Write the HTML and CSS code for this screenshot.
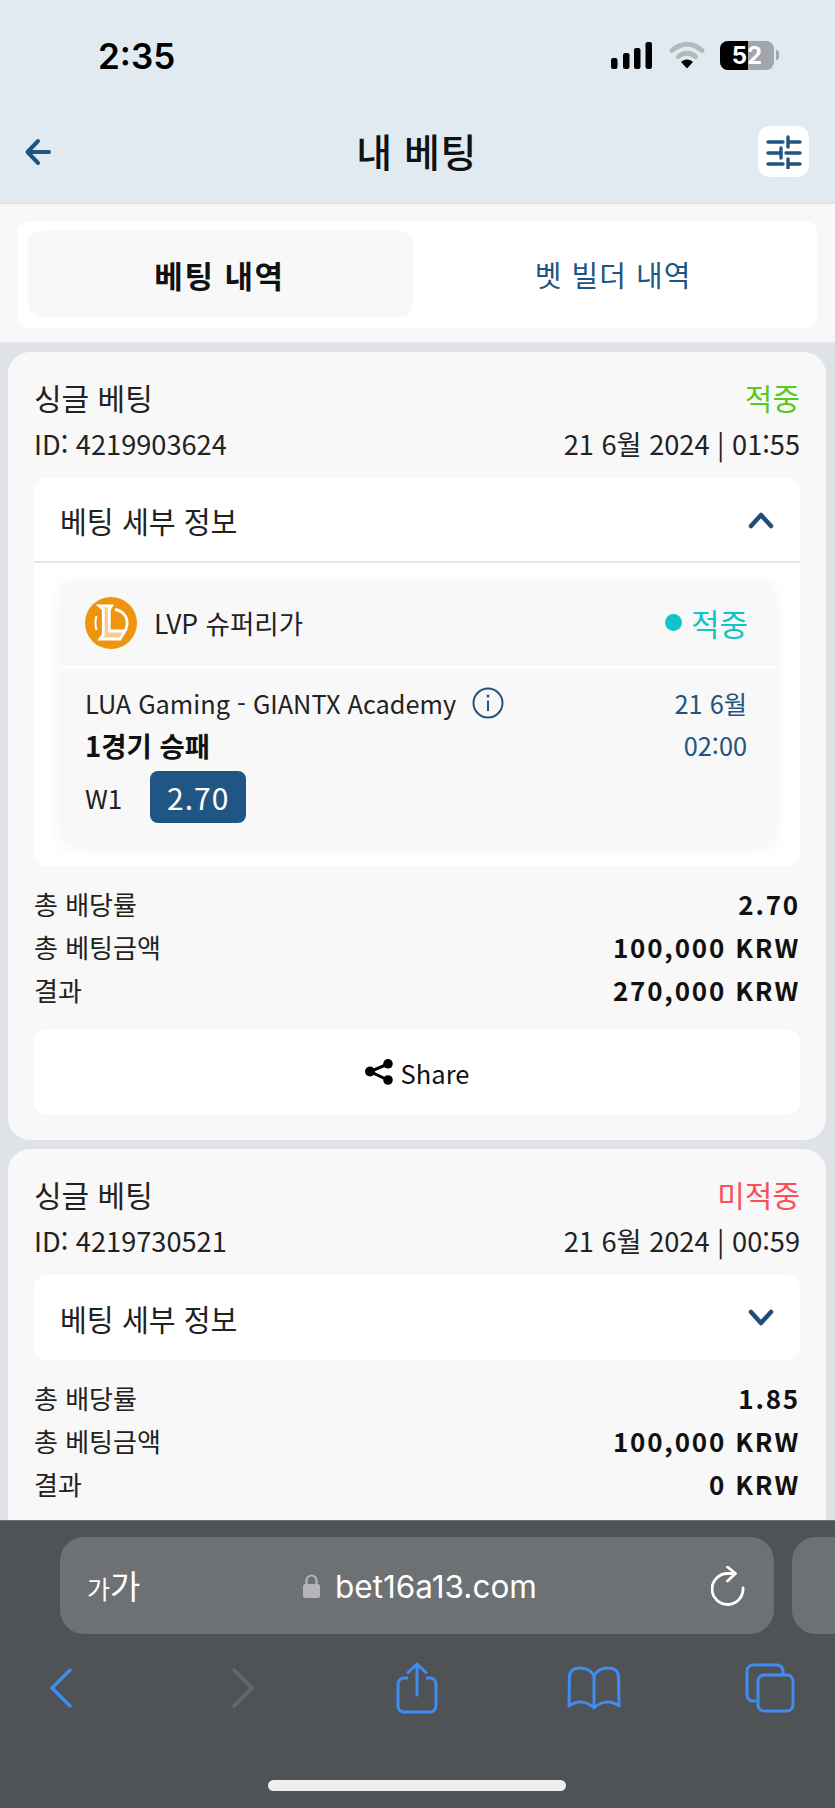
FILE: index.html
```html
<!DOCTYPE html>
<html lang="ko">
<head>
<meta charset="utf-8">
<title>내 베팅</title>
<link rel="stylesheet" href="styles.css">
</head>
<body>
<div class="phone">
  <header class="top">
    <div class="status">
      <span class="clock">2:35</span>
      <div class="status-icons">
        <svg class="signal" width="41" height="27" viewBox="0 0 41 27"><rect x="0" y="16" width="6.500" height="11" rx="2.200"/><rect x="12" y="11" width="6.500" height="16" rx="2.200"/><rect x="23" y="6" width="6.500" height="21" rx="2.200"/><rect x="34.500" y="0" width="6.500" height="27" rx="2.200"/></svg>
        <svg class="wifi" width="36" height="28" viewBox="0 0 36 28"><path d="M3 9.500C12 1 24 1 33 9.500" fill="none" stroke="#b4b9bc" stroke-width="5" stroke-linecap="round"/><path d="M9.500 15.500C14.500 11 21.500 11 26.500 15.500" fill="none" stroke="#b4b9bc" stroke-width="5" stroke-linecap="round"/><path d="M12 21C15 17.500 21 17.500 24 21L18 27.500Z" fill="#000"/></svg>
        <div class="battery"><span class="batt-fill"></span><span class="batt-num">52</span></div>
        <span class="batt-cap"></span>
      </div>
    </div>
    <div class="navbar">
      <svg class="nav-back" width="28" height="28" viewBox="0 0 28 28"><path d="M25 14H4M14 3 3.500 14 14 25" fill="none" stroke="#1f5580" stroke-width="4" stroke-linecap="round" stroke-linejoin="round"/></svg>
      <h1 class="title">내 베팅</h1>
      <button class="filter">
        <svg width="36" height="34" viewBox="0 0 36 34"><g stroke="#1f5580" stroke-width="3.400" stroke-linecap="round" fill="none"><path d="M2 7H17M22 7H34M22 2V12M2 18H15M15 23V13M20 18H34M2 29H17M22 29H34M22 24V33"/></g></svg>
      </button>
    </div>
  </header>

  <main class="content">
    <section class="tabs-wrap">
      <div class="tabs">
        <div class="tab tab-active">베팅 내역</div>
        <div class="tab tab-plain">벳 빌더 내역</div>
      </div>
    </section>

    <article class="card">
      <div class="row head"><span>싱글 베팅</span><span class="won">적중</span></div>
      <div class="row meta"><span>ID: 4219903624</span><span>21 6월 2024 | 01:55</span></div>
      <div class="details open">
        <div class="details-head">
          <span>베팅 세부 정보</span>
          <svg class="chev" width="26" height="18" viewBox="0 0 26 18"><path d="M3 15 13 4l10 11" fill="none" stroke="#1f4f78" stroke-width="4.500" stroke-linecap="round" stroke-linejoin="round"/></svg>
        </div>
        <div class="details-body">
          <div class="event">
            <div class="league">
              <svg class="logo" width="52" height="52" viewBox="0 0 52 52"><circle cx="26" cy="26" r="26" fill="#ee9510"/><g fill="none" stroke="#fff" stroke-width="2.800"><path d="M14.300 9H26.500L24.300 12.500V34H40L35 42H15L18.300 37.500V12.500Z" fill="#f7cc8c"/><path d="M30 12.500C39 14 43 21 42 28C41.600 30 41 32 40 33.500"/><path d="M11.500 19C10 24 10 28 11.500 33" stroke-width="2"/></g></svg>
              <span class="league-name">LVP 슈퍼리가</span>
              <span class="event-state"><i class="dot"></i>적중</span>
            </div>
            <div class="match">
              <div class="match-line">
                <span class="teams">LUA Gaming - GIANTX Academy</span>
                <svg class="info" width="32" height="32" viewBox="0 0 32 32"><circle cx="16" cy="16" r="14.500" fill="none" stroke="#1f5580" stroke-width="2"/><path d="M16 13.500V24" stroke="#1f5580" stroke-width="2"/><circle cx="16" cy="9" r="1.500" fill="#1f5580"/></svg>
                <span class="when">21 6월</span>
              </div>
              <div class="match-line market-line">
                <b class="market">1경기 승패</b>
                <span class="when">02:00</span>
              </div>
              <div class="pick">
                <span>W1</span>
                <span class="odd">2.70</span>
              </div>
            </div>
          </div>
        </div>
      </div>
      <div class="totals">
        <div class="row total"><span>총 배당률</span><b>2.70</b></div>
        <div class="row total"><span>총 베팅금액</span><b>100,000 KRW</b></div>
        <div class="row total"><span>결과</span><b>270,000 KRW</b></div>
      </div>
      <button class="share">
        <svg width="28" height="26" viewBox="0 0 28 26"><g fill="#000"><circle cx="5" cy="12.500" r="5"/><circle cx="23" cy="4.800" r="4.800"/><circle cx="23" cy="21" r="4.800"/></g><path d="M23 5 5 12.500 23 21" fill="none" stroke="#000" stroke-width="3"/></svg>
        <span>Share</span>
      </button>
    </article>

    <article class="card card-cut">
      <div class="row head"><span>싱글 베팅</span><span class="lost">미적중</span></div>
      <div class="row meta"><span>ID: 4219730521</span><span>21 6월 2024 | 00:59</span></div>
      <div class="details">
        <div class="details-head closed">
          <span>베팅 세부 정보</span>
          <svg class="chev" width="26" height="18" viewBox="0 0 26 18"><path d="M3 3l10 11L23 3" fill="none" stroke="#1f4f78" stroke-width="4.500" stroke-linecap="round" stroke-linejoin="round"/></svg>
        </div>
      </div>
      <div class="totals">
        <div class="row total"><span>총 배당률</span><b>1.85</b></div>
        <div class="row total"><span>총 베팅금액</span><b>100,000 KRW</b></div>
        <div class="row total"><span>결과</span><b>0 KRW</b></div>
      </div>
    </article>
  </main>

  <footer class="browser">
    <div class="url-row">
      <div class="url">
        <span class="aa"><small>가</small>가</span>
        <span class="host">
          <svg width="19" height="24" viewBox="0 0 19 24"><path d="M4.500 11V6.500a5 5 0 0 1 10 0V11" fill="none" stroke="#b3b5ba" stroke-width="2.200"/><rect x="1" y="10" width="17" height="14" rx="2.500" fill="#b3b5ba"/></svg>
          <span>bet16a13.com</span>
        </span>
        <svg class="reload" width="36" height="40" viewBox="0 0 36 40"><path d="M32 22A15.500 15.500 0 1 1 16.500 7.500H24" fill="none" stroke="#fff" stroke-width="2.800" stroke-linecap="round"/><path d="M16.500 1 24.500 7.500 16.500 15" fill="none" stroke="#fff" stroke-width="2.800" stroke-linecap="round" stroke-linejoin="round"/></svg>
      </div>
      <div class="url-next"></div>
    </div>
    <nav class="toolbar">
      <svg width="24" height="42" viewBox="0 0 24 42"><path d="M21 3 3 21l18 18" fill="none" stroke="#3f8cf2" stroke-width="3.400" stroke-linecap="round" stroke-linejoin="round"/></svg>
      <svg width="24" height="42" viewBox="0 0 24 42"><path d="M3 3l18 18L3 39" fill="none" stroke="#65696c" stroke-width="3.400" stroke-linecap="round" stroke-linejoin="round"/></svg>
      <svg width="42" height="52" viewBox="0 0 42 52"><path d="M12 16H8a6 6 0 0 0-6 6v22a6 6 0 0 0 6 6h26a6 6 0 0 0 6-6V22a6 6 0 0 0-6-6h-4" fill="none" stroke="#3f8cf2" stroke-width="3"/><path d="M21 33V2M12 10.500 21 2l9 8.500" fill="none" stroke="#3f8cf2" stroke-width="3" stroke-linecap="round" stroke-linejoin="round"/></svg>
      <svg width="54" height="44" viewBox="0 0 54 44"><path d="M27 10C24 4 18 2 13 2 6 2 3 5 2.500 10L2 40C10 34 20 35 27 42 34 35 44 34 52 40L51.500 10C51 5 48 2 41 2 36 2 30 4 27 10V41" fill="none" stroke="#3f8cf2" stroke-width="3" stroke-linejoin="round"/></svg>
      <svg width="50" height="50" viewBox="0 0 50 50"><path d="M11.500 38H8a6 6 0 0 1-6-6V8a6 6 0 0 1 6-6h24a6 6 0 0 1 6 6v4" fill="none" stroke="#3f8cf2" stroke-width="3"/><rect x="13" y="12" width="35" height="36" rx="6" fill="none" stroke="#3f8cf2" stroke-width="3"/></svg>
    </nav>
    <div class="home-bar"></div>
  </footer>
</div>
</body>
</html>
```

FILE: styles.css
```css
* { box-sizing: border-box; }
html, body { margin: 0; padding: 0; }
body {
  width: 835px;
  height: 1808px;
  overflow: hidden;
  font-family: "Noto Sans CJK KR", "Noto Sans", sans-serif;
  color: #111;
}
.phone { width: 835px; height: 1808px; display: flex; flex-direction: column; background: #dfe3e8; }

/* top */
.top { height: 204px; flex: none; background: #e1eaf1; border-bottom: 1px solid #dde1e6; display: flex; flex-direction: column; }
.status { height: 112px; flex: none; padding: 36px 0 0 98px; display: flex; justify-content: space-between; align-items: flex-start; }
.clock { font-family: Inter, "Liberation Sans", sans-serif; font-weight: 600; font-size: 35px; line-height: 40px; color: #000; }
.status-icons { display: flex; align-items: center; height: 30px; margin: 4px 56px 0 0; }
.signal { fill: #000; margin-right: 17px; }
.wifi { margin-right: 15px; }
.battery { position: relative; width: 54px; height: 29px; border-radius: 8px; background: #a0a6ab; overflow: hidden; }
.batt-fill { display: block; width: 28px; height: 100%; background: #000; }
.batt-num { position: absolute; inset: 0; text-align: center; font-family: Inter, "Liberation Sans", sans-serif; font-weight: 700; font-size: 24px; line-height: 29px; color: #fff; }
.batt-cap { width: 3px; height: 10px; margin-left: 2px; background: #a0a6ab; border-radius: 0 3px 3px 0; }
.navbar { flex: 1; display: flex; align-items: flex-start; justify-content: space-between; padding: 14px 26px 0 24px; position: relative; }
.nav-back { margin-top: 12px; }
.title { position: absolute; left: 0; right: 2px; top: 12px; margin: 0; text-align: center; font-size: 39px; line-height: 52px; font-weight: 500; color: #111; letter-spacing: 0.5px; }
.filter { width: 51px; height: 51px; border: 0; padding: 0; border-radius: 12px; background: #fff; display: flex; align-items: center; justify-content: center; }

/* content */
.content { flex: 1; min-height: 0; overflow: hidden; }
.tabs-wrap { background: #f8f8f8; padding: 17px 18px 14px 17px; border-bottom: 1px solid #e4e6ea; }
.tabs { height: 107px; background: #fff; border-radius: 12px; padding: 10px 11px; display: grid; grid-template-columns: 385px 1fr; }
.tab { display: flex; align-items: center; justify-content: center; font-size: 30px; letter-spacing: 1px; color: #1f5580; border-radius: 14px; height: 86px; }
.tab-plain { font-size: 29px; padding-left: 7px; }
.tab-active { background: #f8f8f8; color: #111; font-weight: 700; font-size: 31px; letter-spacing: 1.500px; padding-right: 2px; }

.card { margin: 9px 9px 9px 8px; background: #f8f8f8; border-radius: 22px; padding: 24px 26px 25px 26px; }
.card-cut { padding-bottom: 60px; }
.row { display: flex; justify-content: space-between; align-items: center; }
.head { font-size: 30px; line-height: 42px; color: #222; }
.won { color: #58c91f; }
.lost { color: #fb4f5b; }
.meta { font-size: 27.200px; line-height: 40px; margin-top: 5px; color: #222; }
.details { background: #fff; border-radius: 13px; margin-top: 15px; }
.details.open { padding-bottom: 23px; }
.details-head { height: 85px; padding: 0 26px; display: flex; align-items: center; justify-content: space-between; font-size: 29.200px; color: #222; }
.open .details-head { border-bottom: 2px solid #e3e7ec; }
.chev { display: block; }
.details-body { padding: 18px 25px 0 26px; }
.event { background: #f8f8f8; border-radius: 12px; box-shadow: 0 4px 16px rgba(40, 50, 70, .06); height: 262px; }
.league { height: 87px; display: flex; align-items: center; padding: 0 27px 2px 25px; border-bottom: 2px solid #fff; }
.logo { flex: none; }
.league-name { font-size: 26.500px; margin-left: 17px; flex: 1; color: #222; }
.event-state { display: flex; align-items: center; font-size: 31px; color: #12c5c5; }
.dot { width: 17px; height: 17px; border-radius: 50%; background: #12c5c5; margin-right: 9px; }
.match { padding: 15px 28px 0 25px; }
.match-line { display: flex; align-items: center; height: 40px; font-size: 25.300px; color: #222; }
.market-line { margin-top: 2px; }
.teams { margin-right: 16px; }
.info { flex: none; }
.when { margin-left: auto; color: #1f5580; }
.market { font-weight: 700; color: #111; font-size: 27.500px; }
.pick { display: flex; align-items: center; margin-top: 6px; font-size: 26px; color: #222; }
.odd { margin-left: 28px; width: 96px; height: 52px; border-radius: 8px; background: #205683; color: #fff; font-size: 30px; letter-spacing: 1px; display: flex; align-items: center; justify-content: center; }
.totals { margin-top: 18px; display: flex; flex-direction: column; gap: 3px; }
.total { font-size: 26px; line-height: 40px; color: #222; }
.total b { font-weight: 700; letter-spacing: 1.800px; color: #111; }
.share { width: 100%; height: 86px; margin-top: 19px; border: 0; border-radius: 13px; background: #fff; font: inherit; font-size: 25.500px; color: #111; display: flex; align-items: center; justify-content: center; gap: 8px; }

/* browser */
.browser { flex: none; height: 288px; background: #4f5356; border-top: 1px solid #6f7376; position: relative; overflow: hidden; }
.url-row { display: flex; gap: 18px; padding: 16px 0 0 60px; }
.url { width: 714px; flex: none; height: 97px; background: #6d7174; border-radius: 24px; display: flex; align-items: center; position: relative; padding: 0 27px 0 27px; color: #fff; }
.aa { font-size: 33px; line-height: 1; }
.aa small { font-size: 25px; }
.host { position: absolute; left: 242px; top: 1px; bottom: 0; display: flex; align-items: center; gap: 14px; font-family: Inter, "Liberation Sans", sans-serif; font-size: 31.500px; }
.reload { margin-left: auto; }
.url-next { width: 100px; flex: none; height: 97px; background: #6d7174; border-radius: 24px; }
.toolbar { height: 80px; margin-top: 14px; padding-left: 49px; display: grid; grid-template-columns: 182px 165px 171px 178px 50px; align-items: center; }
.home-bar { position: absolute; left: 268px; bottom: 17px; width: 298px; height: 11px; border-radius: 6px; background: #eee; }
```
